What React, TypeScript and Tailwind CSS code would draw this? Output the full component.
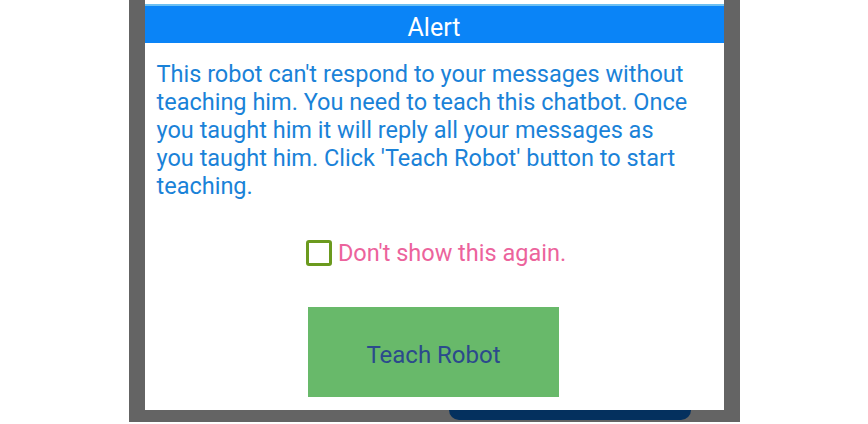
import { useState } from "react";

export default function App() {
  const [hide, setHide] = useState(false);

  return (
    <div className="w-[868px] h-[424px] bg-white overflow-hidden" style={{ fontFamily: "Roboto, 'Noto Sans', sans-serif" }}>
      <div className="mx-auto w-[611px] bg-[#646464] px-[16px] pb-[2px]">
        <div className="bg-white pt-[4px]">
          <div className="h-[2px] bg-[#6cc0f2]" />
          <div className="h-[37px] bg-[#0a84f7] flex items-center justify-center">
            <h2 className="text-white text-[25px] leading-none pt-[5px]">Alert</h2>
          </div>

          <p className="px-[12px] pt-[17px] text-[23.5px] leading-[28px] text-[#1a82d8]">
            This robot can't respond to your messages without
            <br />
            teaching him. You need to teach this chatbot. Once
            <br />
            you taught him it will reply all your messages as
            <br />
            you taught him. Click 'Teach Robot' button to start
            <br />
            teaching.
          </p>

          <label className="mt-[40px] ml-[4px] flex items-center justify-center gap-[6px] h-[26px] cursor-pointer">
            <button
              type="button"
              onClick={() => setHide(!hide)}
              className="w-[26px] h-[26px] rounded-[3px] border-[3px] border-[#6b9a1e] bg-white"
            />
            <span className="text-[23.5px] text-[#ec639c] leading-none pt-[1px]">Don't show this again.</span>
          </label>

          <div className="flex justify-center pt-[41px] pb-[13px]">
            <button
              type="button"
              className="w-[251px] h-[90px] bg-[#68b96a] text-[#2b4a8c] text-[24px] ml-[-1px] pt-[5px]"
            >
              Teach Robot
            </button>
          </div>
        </div>

        {/* edge of the screen button behind the dialog */}
        <div className="ml-[304px] w-[242px] h-[10px] rounded-b-[16px] bg-[#04305e]" />
      </div>
    </div>
  );
}
